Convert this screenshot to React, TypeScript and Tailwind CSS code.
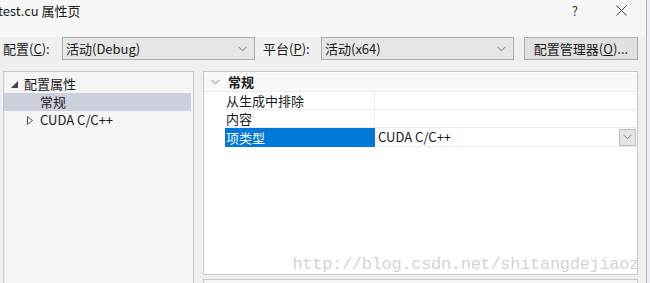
import React from "react";

const font = { fontFamily: '"Noto Sans CJK SC", "Noto Sans", sans-serif' };

function Chevron({ className = "" }: { className?: string }) {
  return (
    <svg width="9" height="6" viewBox="0 0 9 6" className={className}>
      <path d="M0.5 0.8 L4.5 4.8 L8.5 0.8" fill="none" stroke="#7a7a7a" strokeWidth="1" />
    </svg>
  );
}

function Select({ text, w }: { text: string; w: string }) {
  return (
    <div className={`${w} h-[23px] border border-[#acacac] bg-[#e6e6e6] flex items-center justify-between pl-[3px] pr-[7px]`}>
      <span className="text-[13px] text-[#1a1a1a]">{text}</span>
      <Chevron />
    </div>
  );
}

export default function App() {
  return (
    <div className="w-[650px] h-[283px] overflow-hidden bg-[#f0f0f0] flex" style={font}>
      <div className="flex-1 flex flex-col">
        {/* title bar */}
        <div className="h-[20px] shrink-0 flex items-center bg-[#f7f7f7] pl-0 pr-[19px]">
          <span className="text-[13px] text-[#1a1a1a] ml-[-2px] leading-none">test.cu 属性页</span>
          <span className="ml-auto text-[13px] text-[#333] leading-none mr-[38px]">?</span>
          <svg width="11" height="11" viewBox="0 0 11 11">
            <path d="M0.5 0.5 L10.5 10.5 M10.5 0.5 L0.5 10.5" stroke="#444" strokeWidth="1" />
          </svg>
        </div>
        <div className="h-[17px] shrink-0 bg-[#f7f7f7]" />
        {/* config row */}
        <div className="flex items-center h-[23px] shrink-0">
          <span className="text-[13px] text-[#1a1a1a] ml-[3px] w-[59px]">
            配置(<span className="underline">C</span>):
          </span>
          <Select text="活动(Debug)" w="w-[193px]" />
          <span className="text-[13px] text-[#1a1a1a] ml-[8px] w-[58px]">
            平台(<span className="underline">P</span>):
          </span>
          <Select text="活动(x64)" w="w-[193px]" />
          <div className="ml-[10px] w-[114px] h-[23px] border border-[#adadad] bg-[#e1e1e1] flex items-center justify-center text-[13px] text-[#1a1a1a]">
            配置管理器(<span className="underline">O</span>)...
          </div>
        </div>
        <div className="h-[11px] shrink-0" />
        {/* panels */}
        <div className="flex flex-1 min-h-0">
          {/* tree */}
          <div className="ml-[3px] w-[191px] shrink-0 border border-[#c8c8c8] bg-[#f5f5f5] pt-[3px] text-[13px] text-[#1a1a1a] h-[240px]">
            <div className="h-[18px] flex items-center">
              <svg width="7" height="7" viewBox="0 0 7 7" className="ml-[7px] mr-[6px]">
                <path d="M7 0 L7 7 L0 7 Z" fill="#444" />
              </svg>
              <span>配置属性</span>
            </div>
            <div className="h-[18px] flex items-center bg-[#cdd1dd] mr-[2px]">
              <span className="ml-[36px]">常规</span>
            </div>
            <div className="h-[18px] flex items-center">
              <svg width="6" height="9" viewBox="0 0 6 9" className="ml-[23px] mr-[7px]">
                <path d="M0.5 0.5 L5.5 4.5 L0.5 8.5 Z" fill="none" stroke="#555" strokeWidth="1" />
              </svg>
              <span>CUDA C/C++</span>
            </div>
          </div>
          {/* right side */}
          <div className="ml-[9px] w-[435px] shrink-0 flex flex-col">
            <div className="h-[204px] shrink-0 border border-[#c8c8c8] bg-white relative text-[13px] text-[#1a1a1a] pt-[1px]">
              <div className="h-[19px] flex items-center bg-[#f8f9fb] border-b border-[#ececec]">
                <span className="w-[21px] flex justify-center ml-[1px]">
                  <Chevron />
                </span>
                <span className="font-bold ml-[2px]">常规</span>
              </div>
              {["从生成中排除", "内容"].map((k) => (
                <div key={k} className="h-[18px] flex">
                  <div className="w-[21px]" />
                  <div className="w-[150px] border-b border-r border-[#ececec] flex items-center pl-[1px]">{k}</div>
                  <div className="flex-1 border-b border-[#ececec]" />
                </div>
              ))}
              <div className="h-[19px] flex">
                <div className="w-[21px]" />
                <div className="w-[150px] bg-[#0078d7] text-white flex items-center pl-[1px]">项类型</div>
                <div className="flex-1 flex items-center pl-[3px] border-b border-[#ececec]">
                  <span>CUDA C/C++</span>
                  <div className="ml-auto mr-[1px] w-[17px] h-[17px] border border-[#bcbcbc] bg-[#e6e6e6] flex items-center justify-center">
                    <Chevron />
                  </div>
                </div>
              </div>
              <div
                className="absolute right-[-2px] bottom-[1px] text-[17px] text-[#d4d4d4] leading-none tracking-[-0.3px]"
                style={{ fontFamily: '"Liberation Mono", monospace' }}
              >
                http://blog.csdn.net/shitangdejiaoz
              </div>
            </div>
            <div className="mt-[4px] h-[20px] shrink-0 border border-[#c8c8c8] bg-[#f5f5f5] px-[4px] pt-[3px]">
              <span className="font-bold text-[13px] text-[#1a1a1a] leading-none">项类型</span>
            </div>
          </div>
        </div>
      </div>
      <div className="w-[4px] bg-[#f0f0f0] border-l border-[#9fb3cf]" />
    </div>
  );
}
